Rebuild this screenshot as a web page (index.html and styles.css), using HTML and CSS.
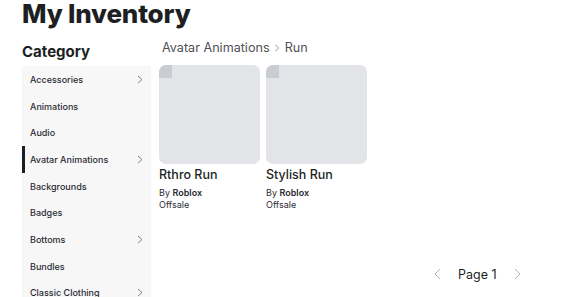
FILE: index.html
```html
<!DOCTYPE html>
<html lang="en">
<head>
  <meta charset="UTF-8" />
  <title>My Inventory</title>
  <link rel="stylesheet" href="styles.css">
</head>
<body>
  <h1 class="title">My Inventory</h1>

  <div class="layout">
    <aside class="sidebar">
      <h2>Category</h2>
      <ul class="menu">
        <li>Accessories <svg class="chev" viewBox="0 0 6 9"><polyline points="1,1 5,4.5 1,8"/></svg></li>
        <li>Animations</li>
        <li>Audio</li>
        <li class="active">Avatar Animations <svg class="chev" viewBox="0 0 6 9"><polyline points="1,1 5,4.5 1,8"/></svg></li>
        <li>Backgrounds</li>
        <li>Badges</li>
        <li>Bottoms <svg class="chev" viewBox="0 0 6 9"><polyline points="1,1 5,4.5 1,8"/></svg></li>
        <li>Bundles</li>
        <li>Classic Clothing <svg class="chev" viewBox="0 0 6 9"><polyline points="1,1 5,4.5 1,8"/></svg></li>
      </ul>
    </aside>

    <main class="content">
      <div class="crumbs">Avatar Animations <svg class="sep" viewBox="0 0 6 9"><polyline points="1,1 5,4.5 1,8"/></svg> Run</div>
      <div class="items">
        <div class="item">
          <div class="thumb"><span class="corner"></span></div>
          <div class="name">Rthro Run</div>
          <div class="meta">By <b>Roblox</b></div>
          <div class="meta">Offsale</div>
        </div>
        <div class="item">
          <div class="thumb"><span class="corner"></span></div>
          <div class="name">Stylish Run</div>
          <div class="meta">By <b>Roblox</b></div>
          <div class="meta">Offsale</div>
        </div>
      </div>
      <div class="pager">
        <svg class="arrow" viewBox="0 0 7 12"><polyline points="6,1 1,6 6,11"/></svg>
        <span>Page 1</span>
        <svg class="arrow" viewBox="0 0 7 12"><polyline points="1,1 6,6 1,11"/></svg>
      </div>
    </main>
  </div>
</body>
</html>
```
FILE: styles.css
```css
body {
  margin: 0;
  padding: 0 0 0 22px;
  font-family: Inter, "Noto Sans", sans-serif;
  color: #1d1f23;
  background: #fff;
  overflow: hidden;
}

svg polyline {
  fill: none;
  stroke: currentColor;
  stroke-width: 1;
}

.title {
  font-size: 26px;
  font-weight: 800;
  margin: -1px 0 0;
  line-height: 30px;
  letter-spacing: -0.2px;
}

.layout {
  display: flex;
  gap: 8px;
}

.sidebar {
  width: 129px;
  flex: none;
}

.sidebar h2 {
  font-size: 15px;
  font-weight: 700;
  margin: 10px 0 0;
  line-height: 25px;
}

.menu {
  list-style: none;
  margin: 2px 0 0;
  padding: 0;
  background: #f7f7f8;
}

.menu li {
  height: 26.7px;
  display: flex;
  align-items: center;
  justify-content: space-between;
  padding: 0 8px 0 5px;
  font-size: 9px;
  font-weight: 500;
  color: #2a2c31;
  border-left: 3px solid transparent;
}

.menu li.active {
  border-left-color: #1d1f23;
}

.chev {
  width: 6px;
  height: 9px;
  color: #7d8087;
}

.content {
  flex: 1;
}

.crumbs {
  font-size: 12.6px;
  color: #4e5158;
  margin: 11px 0 0 3px;
  line-height: 15px;
}

.crumbs .sep {
  width: 6px;
  height: 8px;
  color: #8a8d93;
  margin: 0 1px;
}

.items {
  display: flex;
  gap: 6px;
  margin-top: 10px;
}

.item {
  width: 101px;
}

.thumb {
  height: 99px;
  background: #e3e4e8;
  border-radius: 7px;
  overflow: hidden;
}

.corner {
  display: block;
  width: 13px;
  height: 13px;
  background: #c9ccd3;
}

.name {
  font-size: 12.5px;
  font-weight: 500;
  margin-top: 3px;
  line-height: 16px;
}

.meta {
  font-size: 9px;
  line-height: 12.5px;
  color: #2a2c31;
}

.name + .meta {
  margin-top: 3.5px;
}

.meta b {
  font-weight: 600;
}

.pager {
  display: flex;
  align-items: center;
  gap: 17px;
  margin: 55px 0 0 275px;
  font-size: 12.5px;
}

.pager .arrow {
  width: 7px;
  height: 12px;
  color: #b5b7bc;
}
```
